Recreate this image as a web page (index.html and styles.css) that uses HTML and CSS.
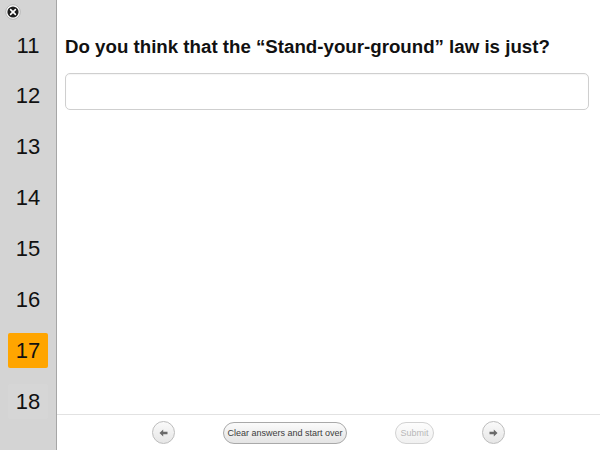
FILE: index.html
```html
<!DOCTYPE html>
<html>
<head>
<meta charset="utf-8">
<link rel="stylesheet" href="styles.css">
</head>
<body>
<div class="app">
  <aside class="sidebar">
    <span class="close">
      <svg width="16" height="16" viewBox="0 0 16 16">
        <circle cx="8" cy="8" r="7.2" fill="#fff" stroke="#9a9a9a" stroke-width="0.6"/>
        <circle cx="8" cy="8" r="5.6" fill="#1e1e1e"/>
        <path d="M5.6 5.6 L10.4 10.4 M10.4 5.6 L5.6 10.4" stroke="#fff" stroke-width="1.6" stroke-linecap="round"/>
      </svg>
    </span>
    <ul class="nums">
      <li class="num">11</li>
      <li class="num">12</li>
      <li class="num">13</li>
      <li class="num">14</li>
      <li class="num">15</li>
      <li class="num">16</li>
      <li class="num active">17</li>
      <li class="num faint">18</li>
    </ul>
  </aside>
  <main class="main">
    <section class="content">
      <h1 class="question">Do you think that the “Stand-your-ground” law is just?</h1>
      <div class="answer"></div>
    </section>
    <footer class="toolbar">
      <button class="circle" aria-label="Previous">
        <svg width="9" height="8" viewBox="0 0 9 8"><path d="M0.5 4 L4.2 0.6 L4.2 2.7 L8.5 2.7 L8.5 5.3 L4.2 5.3 L4.2 7.4 Z" fill="#6a6a6a"/></svg>
      </button>
      <button class="pill clear">Clear answers and start over</button>
      <button class="pill submit">Submit</button>
      <button class="circle" aria-label="Next">
        <svg width="9" height="8" viewBox="0 0 9 8"><path d="M8.5 4 L4.8 0.6 L4.8 2.7 L0.5 2.7 L0.5 5.3 L4.8 5.3 L4.8 7.4 Z" fill="#6a6a6a"/></svg>
      </button>
    </footer>
  </main>
</div>
</body>
</html>
```

FILE: styles.css
```css
html, body {
  margin: 0;
  padding: 0;
  background: #fff;
}
body {
  font-family: "Liberation Sans", Arial, Helvetica, sans-serif;
  width: 600px;
  height: 450px;
  overflow: hidden;
}
.app {
  display: grid;
  grid-template-columns: 57px 1fr;
  height: 450px;
}
.sidebar {
  position: relative;
  background: #d4d4d4;
  border-right: 1px solid #a6a6a6;
}
.close {
  position: absolute;
  left: 5px;
  top: 4px;
  width: 16px;
  height: 16px;
  display: block;
}
.close svg { display: block; }
.nums {
  list-style: none;
  margin: 0;
  padding: 28px 0 0 8px;
  display: flex;
  flex-direction: column;
  gap: 15.9px;
}
.num {
  width: 40px;
  height: 35px;
  display: flex;
  align-items: center;
  justify-content: center;
  font-size: 22px;
  color: #111;
  border-radius: 2px;
}
.num.active {
  background: #ffa500;
}
.num.faint {
  background: #d6d6d6;
}
.main {
  display: flex;
  flex-direction: column;
  min-width: 0;
}
.content {
  flex: 1;
  padding: 36px 11px 0 8px;
}
.question {
  margin: 0;
  font-size: 18.7px;
  line-height: 21px;
  font-weight: bold;
  color: #111;
  white-space: nowrap;
}
.answer {
  margin-top: 16px;
  height: 35px;
  border: 1px solid #cfcfcf;
  border-radius: 5px;
  background: #fff;
  box-shadow: inset 0 1px 1px rgba(0,0,0,0.04);
}
.toolbar {
  height: 35px;
  border-top: 1px solid #e2e2e2;
  display: flex;
  align-items: center;
  justify-content: center;
  gap: 48px;
}
button {
  font-family: "Liberation Sans", Arial, Helvetica, sans-serif;
  margin: 0;
  padding: 0;
  cursor: default;
}
.circle {
  width: 23px;
  height: 23px;
  border-radius: 50%;
  border: 1px solid #bdbdbd;
  background: linear-gradient(#fafafa, #e6e6e6);
  display: flex;
  align-items: center;
  justify-content: center;
  box-shadow: 0 1px 0 rgba(255,255,255,0.8);
}
.circle svg { display: block; }
.pill {
  height: 22px;
  border-radius: 11px;
  font-size: 9px;
  background: linear-gradient(#fbfbfb, #e4e4e4);
}
.clear {
  width: 124px;
  border: 1px solid #a9a9a9;
  color: #3c3c3c;
}
.submit {
  width: 39px;
  border: 1px solid #d2d2d2;
  color: #b8b8b8;
  background: linear-gradient(#fdfdfd, #f0f0f0);
}
```
